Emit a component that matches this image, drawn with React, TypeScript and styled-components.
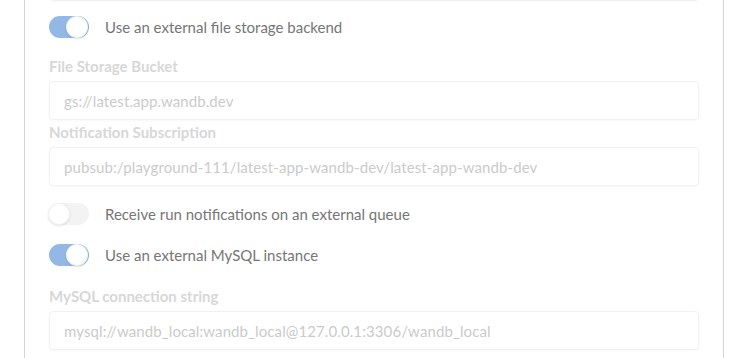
import styled, { createGlobalStyle } from "styled-components";

const GlobalStyle = createGlobalStyle`
  html, body {
    margin: 0;
    padding: 0;
    background: #ffffff;
    overflow: hidden;
  }
  body {
    font-family: Lato, "Liberation Sans", sans-serif;
  }
`;

const Page = styled.div`
  height: 358px;
  display: flex;
  padding-left: 24px;
`;

const Panel = styled.div`
  width: 700px;
  border-left: 1px solid #d4d4d4;
  border-right: 1px solid #d4d4d4;
  padding: 0 24px 0 24px;
  box-sizing: border-box;
  display: flex;
  flex-direction: column;
`;

const Field = styled.div<{ $gap?: number }>`
  display: flex;
  flex-direction: column;
  margin-top: ${(p) => p.$gap ?? 0}px;
`;

const Label = styled.label`
  font-size: 15px;
  font-weight: 700;
  line-height: 16px;
  color: #d7d7d7;
  margin-bottom: 7px;
`;

const Input = styled.div<{ $scrolled?: boolean }>`
  height: 39px;
  box-sizing: border-box;
  border: 1px solid #f1f1f1;
  border-radius: 4px;
  box-shadow: 0 1px 2px rgba(0, 0, 0, 0.03);
  padding: 0 14px;
  display: flex;
  align-items: center;
  font-size: 15px;
  letter-spacing: 0.1px;
  color: #cbcbcb;
  margin-top: ${(p) => (p.$scrolled ? "-38px" : "0")};
`;

const ToggleRow = styled.div<{ $gap: number }>`
  display: flex;
  align-items: center;
  gap: 16px;
  margin-top: ${(p) => p.$gap}px;
  height: 22px;
`;

const Track = styled.div<{ $on: boolean }>`
  position: relative;
  width: 40px;
  height: 22px;
  border-radius: 11px;
  background: ${(p) => (p.$on ? "#93b8e5" : "#f3f3f3")};
  flex-shrink: 0;
`;

const Knob = styled.div<{ $on: boolean }>`
  position: absolute;
  top: 0;
  left: ${(p) => (p.$on ? "17px" : "-1px")};
  width: 22px;
  height: 22px;
  border-radius: 50%;
  background: #fff;
  box-shadow: 0 1px 2px rgba(0, 0, 0, 0.12), inset 0 0 0 1px rgba(0, 0, 0, 0.06);
`;

const ToggleText = styled.span`
  font-size: 15px;
  color: #767676;
`;

const Toggle = ({ on, gap, children }: { on: boolean; gap: number; children: string }) => (
  <ToggleRow $gap={gap}>
    <Track $on={on}>
      <Knob $on={on} />
    </Track>
    <ToggleText>{children}</ToggleText>
  </ToggleRow>
);

export default function App() {
  return (
    <>
      <GlobalStyle />
      <Page>
        <Panel>
          <Input $scrolled />
          <Toggle on gap={15}>
            Use an external file storage backend
          </Toggle>
          <Field $gap={20}>
            <Label>File Storage Bucket</Label>
            <Input>gs://latest.app.wandb.dev</Input>
          </Field>
          <Field $gap={4}>
            <Label>Notification Subscription</Label>
            <Input>pubsub:/playground-111/latest-app-wandb-dev/latest-app-wandb-dev</Input>
          </Field>
          <Toggle on={false} gap={17}>
            Receive run notifications on an external queue
          </Toggle>
          <Toggle on gap={19}>
            Use an external MySQL instance
          </Toggle>
          <Field $gap={22}>
            <Label>MySQL connection string</Label>
            <Input>mysql://wandb_local:wandb_local@127.0.0.1:3306/wandb_local</Input>
          </Field>
        </Panel>
      </Page>
    </>
  );
}
